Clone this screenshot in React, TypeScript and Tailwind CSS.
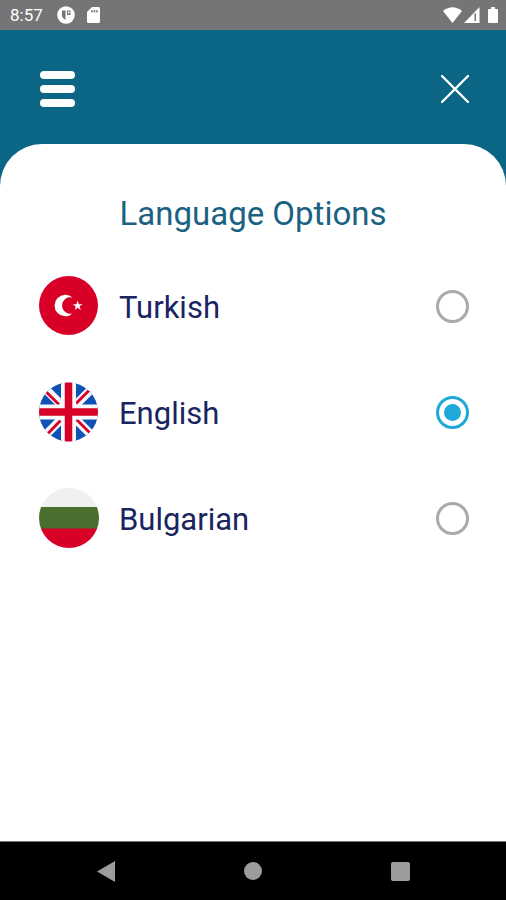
import { useState, type ReactNode } from "react";

function StatusBar() {
  return (
    <div className="flex h-[30px] items-center justify-between bg-[#757575] pr-2 pl-[10px] text-white">
      <div className="flex items-center">
        <span className="text-[17px] leading-5">8:57</span>
        <svg className="ml-[14px] size-[18px]" viewBox="0 0 18 18" aria-hidden="true">
          <circle cx="9" cy="9" r="8.800" fill="#fff" />
          <path d="M5 4.500h3.500V14A5.500 5.500 0 0 1 5 10z" fill="#757575" />
          <path d="M10 4.500h3.500V9H10z" fill="#757575" />
          <path d="M11 5.500h1.500V7.500H11z" fill="#fff" />
        </svg>
        <svg className="ml-3 h-4 w-[13px]" viewBox="0 0 13 16" aria-hidden="true">
          <path d="M5 0h6.500A1.500 1.500 0 0 1 13 1.500v13a1.500 1.500 0 0 1-1.500 1.500h-10A1.500 1.500 0 0 1 0 14.500V5z" fill="#fff" />
          <path d="M5 3v2.500M7.500 3v2.500M10 3v2.500" stroke="#757575" strokeWidth="1.400" />
        </svg>
      </div>
      <div className="flex items-center">
        <svg className="h-4 w-[19px]" viewBox="0 0 19 16" aria-hidden="true">
          <path d="M0 4Q9.500-3.500 19 4L9.500 16z" fill="#fff" />
        </svg>
        <svg className="ml-[2px] size-4" viewBox="0 0 16 16" aria-hidden="true">
          <path d="M15.500 0v16H0z" fill="#fff" />
          <path d="M10.500 6.500H12V14h-1.500z" fill="#757575" />
        </svg>
        <svg className="ml-[8px] h-4 w-[10px]" viewBox="0 0 10 16" aria-hidden="true">
          <path d="M3 0h4v2h2a1 1 0 0 1 1 1v12a1 1 0 0 1-1 1H1a1 1 0 0 1-1-1V3a1 1 0 0 1 1-1h2z" fill="#fff" />
        </svg>
      </div>
    </div>
  );
}

function TurkishFlag() {
  return (
    <svg className="size-[60px]" viewBox="0 0 60 60" aria-hidden="true">
      <circle cx="29.500" cy="29.500" r="29.500" fill="#d80027" />
      <path d="M33.600 37.500A10.800 10.800 0 1 1 33.600 21.500A8.300 8.300 0 1 0 33.600 37.500z" fill="#fff" />
      <path d="M38.700 24.500l1.100 3.700 3.800-.1-3.100 2.200 1.300 3.600-3.100-2.200-3 2.400 1.100-3.700-3.200-2 3.800-.2z" fill="#fff" />
    </svg>
  );
}

function BritishFlag() {
  return (
    <svg className="size-[60px]" viewBox="0 0 60 60" aria-hidden="true">
      <clipPath id="british-disc">
        <circle cx="29.500" cy="30" r="29.500" />
      </clipPath>
      <g clipPath="url(#british-disc)">
        <path d="M0 0h60v60H0z" fill="#0f52b5" />
        <path d="M0 .5l59 59M59 .5l-59 59" stroke="#f8f8fa" strokeWidth="8.500" />
        <path d="M6.500 9.200L20 22.500M50.500 8L37 21.500M8 52.500L21.500 38.500M50.500 50.500L37.500 37.500" stroke="#d80027" strokeWidth="2.800" />
        <path d="M29.500 0v60M0 30h60" stroke="#f8f8fa" strokeWidth="15" />
        <path d="M29.500 0v60M0 30h60" stroke="#d80027" strokeWidth="7.500" />
      </g>
    </svg>
  );
}

function BulgarianFlag() {
  return (
    <svg className="size-[60px]" viewBox="0 0 60 60" aria-hidden="true">
      <clipPath id="bulgarian-disc">
        <circle cx="30" cy="30" r="30" />
      </clipPath>
      <g clipPath="url(#bulgarian-disc)">
        <path d="M0 0h60v20H0z" fill="#f0f0f0" />
        <path d="M0 19h60v22H0z" fill="#496e2d" />
        <path d="M0 40.500h60V60H0z" fill="#d80027" />
      </g>
    </svg>
  );
}

const languages: { id: string; name: string; flag: ReactNode }[] = [
  { id: "tr", name: "Turkish", flag: <TurkishFlag /> },
  { id: "en", name: "English", flag: <BritishFlag /> },
  { id: "bg", name: "Bulgarian", flag: <BulgarianFlag /> },
];

function NavigationBar() {
  return (
    <nav className="grid h-[59px] grid-cols-3 items-center justify-items-center border-t border-[#777] bg-black px-8">
      <button type="button" aria-label="Back">
        <svg className="h-[21px] w-[18px]" viewBox="0 0 18 21" aria-hidden="true">
          <path d="M0 10.500L18 0v21z" fill="#9c9c9c" />
        </svg>
      </button>
      <button type="button" aria-label="Home" className="size-[18px] rounded-full bg-[#9c9c9c]" />
      <button type="button" aria-label="Recent apps" className="size-[19px] rounded-[2px] bg-[#9c9c9c]" />
    </nav>
  );
}

export default function App() {
  const [selected, setSelected] = useState("en");

  return (
    <div className="flex min-h-screen flex-col bg-[#0b6685] font-[Roboto,sans-serif]">
      <StatusBar />
      <header className="flex h-[114px] items-center justify-between px-[37px]">
        <button type="button" aria-label="Menu" className="flex w-10 flex-col items-center gap-[6px] pt-1">
          <span className="h-2 w-[35px] rounded-full bg-white" />
          <span className="h-2 w-[35px] rounded-full bg-white" />
          <span className="h-2 w-[35px] rounded-full bg-white" />
        </button>
        <button type="button" aria-label="Close" className="pt-1">
          <svg className="size-7" viewBox="0 0 28 28" aria-hidden="true">
            <path d="M1 1l26 26M27 1L1 27" stroke="#fff" strokeWidth="2.400" strokeLinecap="round" />
          </svg>
        </button>
      </header>
      <main className="flex-1 rounded-t-[42px] bg-white pt-[50px]">
        <h1 id="language-title" className="text-center text-[33px] leading-10 text-[#1b6282]">
          Language Options
        </h1>
        <div role="radiogroup" aria-labelledby="language-title" className="mt-[42px] flex flex-col gap-[46px] pr-[37px] pl-[39px]">
          {languages.map((language) => (
            <label key={language.id} className="flex items-center text-[31px] leading-10 text-[#1a2460]">
              {language.flag}
              <span className="ml-5 flex-1 pt-1">{language.name}</span>
              <input
                type="radio"
                name="language"
                value={language.id}
                checked={selected === language.id}
                onChange={() => setSelected(language.id)}
                className="size-[33px] appearance-none rounded-full border-[3px] border-[#aaaaaa] bg-clip-content p-[5px] checked:border-[#1fa9d9] checked:bg-[#1fa9d9]"
              />
            </label>
          ))}
        </div>
      </main>
      <NavigationBar />
    </div>
  );
}
